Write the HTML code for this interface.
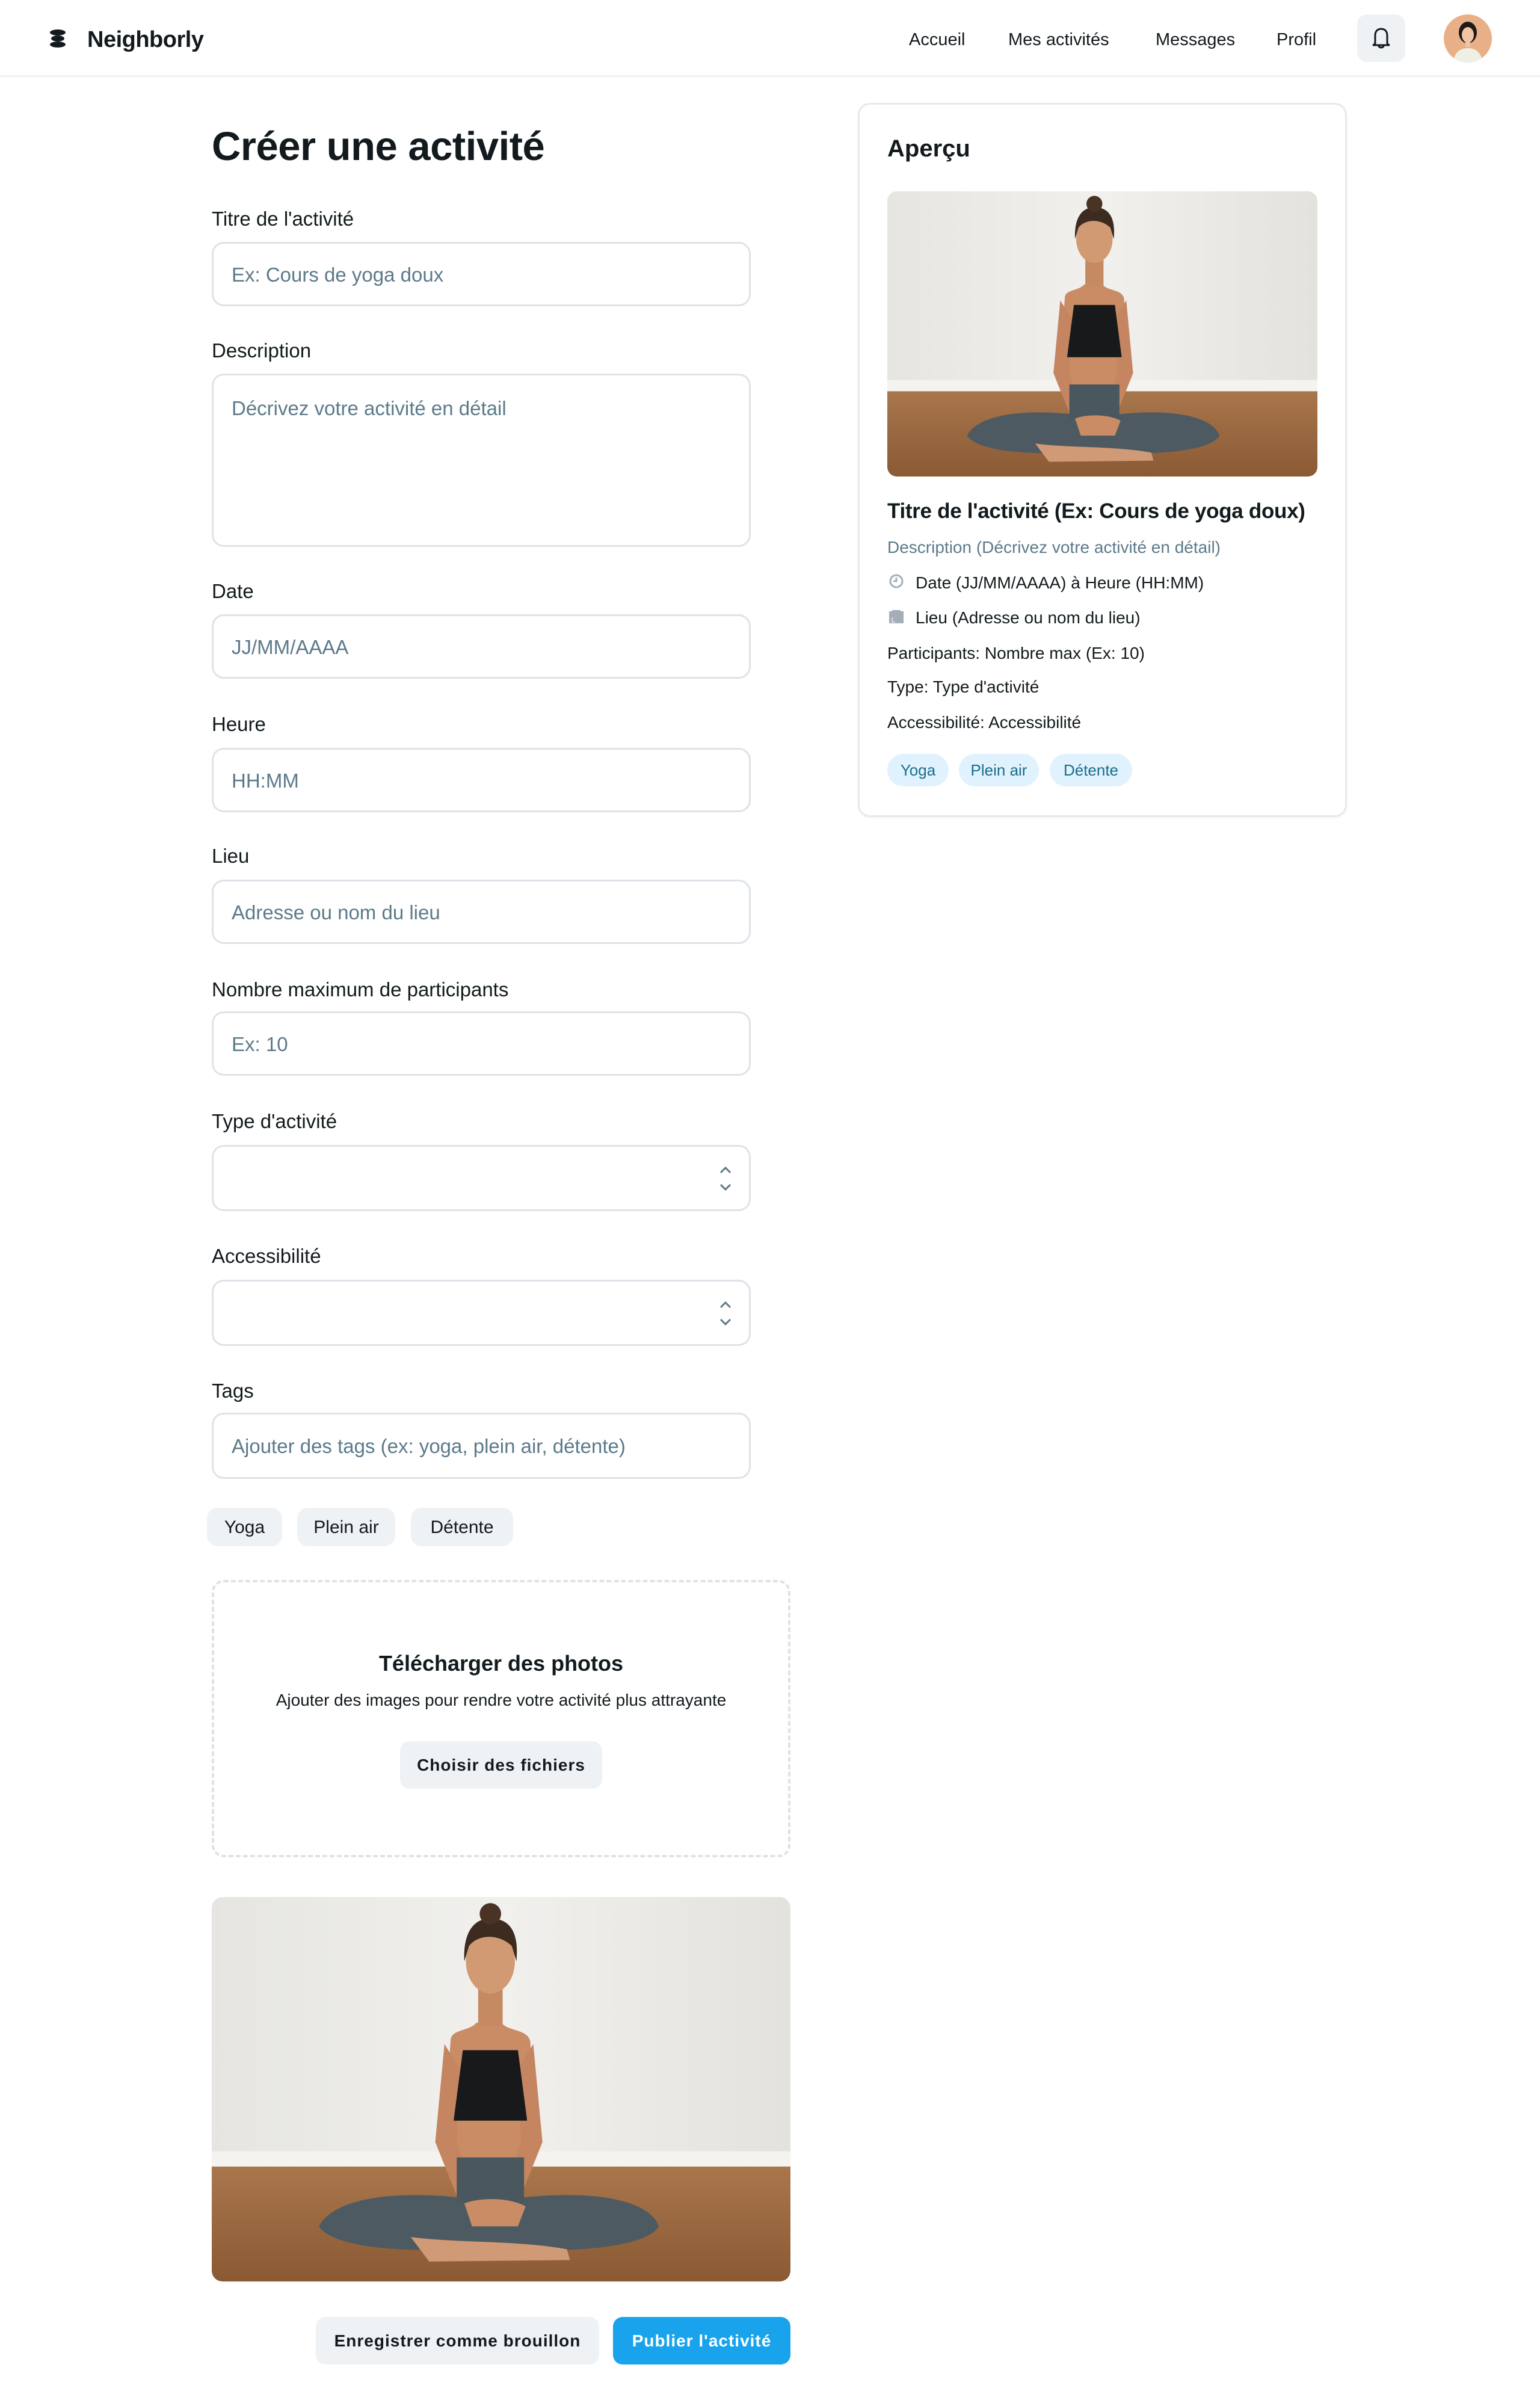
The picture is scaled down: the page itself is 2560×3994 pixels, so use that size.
<!DOCTYPE html>
<html><head><meta charset="utf-8">
<style>
*{box-sizing:border-box;margin:0;padding:0}
html,body{width:2560px;height:3994px;background:#fff;overflow:hidden}
body{font-family:"Liberation Sans",sans-serif;color:#121a1d;position:relative}
.a{position:absolute}
.hdr{left:0;top:0;width:2560px;height:128px;border-bottom:3px solid #eef1f3}
.nav{font-size:29px;top:50px;color:#121a1d}
.lbl{left:352px;font-size:33px;color:#121a1d}
.inp{left:352px;width:896px;height:107px;border:3px solid #dde3e8;border-radius:20px;background:#fff}
.ph{position:absolute;left:30px;top:0;line-height:103px;font-size:33px;color:#5c7a8a}
.chip{top:2506px;height:64px;line-height:66px;background:#eff2f4;border-radius:18px;font-size:30px;text-align:center;color:#121a1d}
.ptag{top:1253px;height:54px;line-height:54px;background:#e0f2fe;border-radius:27px;font-size:26px;text-align:center;color:#1a6e8a}
.pl{left:1475px;font-size:28px;color:#121a1d}
.chev{position:absolute;right:28px;top:30px}
</style></head><body>
<div class="a hdr"></div>
<svg class="a" style="left:80px;top:48px" width="32" height="32" viewBox="0 0 32 32"><ellipse cx="16" cy="6" rx="13" ry="5" fill="#121a1d"/><ellipse cx="16" cy="16" rx="11" ry="5" fill="#121a1d"/><ellipse cx="16" cy="26" rx="13" ry="5" fill="#121a1d"/></svg>
<div class="a" style="left:145px;top:45px;font-size:38px;font-weight:700;letter-spacing:-0.5px">Neighborly</div>
<div class="a nav" style="left:1511px">Accueil</div>
<div class="a nav" style="left:1676px">Mes activités</div>
<div class="a nav" style="left:1921px">Messages</div>
<div class="a nav" style="left:2122px">Profil</div>
<div class="a" style="left:2256px;top:24px;width:80px;height:79px;background:#eff2f4;border-radius:16px"></div>
<svg class="a" style="left:2280px;top:44px" width="32" height="38" viewBox="0 0 32 38"><path d="M6 28 L6 15 C6 8 10 4 16 4 C22 4 26 8 26 15 L26 28 L29 31 L3 31 Z" fill="none" stroke="#121a1d" stroke-width="3" stroke-linejoin="round"/><path d="M12 32 C12 36 20 36 20 32" fill="none" stroke="#121a1d" stroke-width="3"/></svg>
<svg class="a" style="left:2400px;top:24px" width="80" height="80" viewBox="0 0 80 80"><defs><clipPath id="cc"><circle cx="40" cy="40" r="40"/></clipPath></defs><g clip-path="url(#cc)"><rect width="80" height="80" fill="#e9b088"/><path d="M15 80 C18 62 28 56 40 56 C52 56 62 62 65 80Z" fill="#eef0e6"/><ellipse cx="40" cy="30" rx="15" ry="18" fill="#1e1a18"/><ellipse cx="40" cy="34" rx="10" ry="13" fill="#f0c4a4"/><rect x="36" y="44" width="8" height="10" fill="#f0c4a4"/></g></svg>

<div class="a" style="left:352px;top:205px;font-size:67px;font-weight:700;letter-spacing:-0.5px">Créer une activité</div>

<div class="a lbl" style="top:345px">Titre de l'activité</div>
<div class="a inp" style="top:402px"><span class="ph">Ex: Cours de yoga doux</span></div>
<div class="a lbl" style="top:564px">Description</div>
<div class="a inp" style="top:621px;height:288px"><span class="ph" style="top:30px;line-height:50px">Décrivez votre activité en détail</span></div>
<div class="a lbl" style="top:964px">Date</div>
<div class="a inp" style="top:1021px"><span class="ph">JJ/MM/AAAA</span></div>
<div class="a lbl" style="top:1185px">Heure</div>
<div class="a inp" style="top:1243px"><span class="ph">HH:MM</span></div>
<div class="a lbl" style="top:1404px">Lieu</div>
<div class="a inp" style="top:1462px"><span class="ph">Adresse ou nom du lieu</span></div>
<div class="a lbl" style="top:1626px">Nombre maximum de participants</div>
<div class="a inp" style="top:1681px"><span class="ph">Ex: 10</span></div>
<div class="a lbl" style="top:1845px">Type d'activité</div>
<div class="a inp" style="top:1903px;height:110px"><svg class="chev" width="22" height="48" viewBox="0 0 22 48"><path d="M3 13 L11 5 L19 13 M3 33 L11 41 L19 33" fill="none" stroke="#5c7a8a" stroke-width="3"/></svg></div>
<div class="a lbl" style="top:2069px">Accessibilité</div>
<div class="a inp" style="top:2127px;height:110px"><svg class="chev" width="22" height="48" viewBox="0 0 22 48"><path d="M3 13 L11 5 L19 13 M3 33 L11 41 L19 33" fill="none" stroke="#5c7a8a" stroke-width="3"/></svg></div>
<div class="a lbl" style="top:2293px">Tags</div>
<div class="a inp" style="top:2348px;height:110px"><span class="ph" style="line-height:106px">Ajouter des tags (ex: yoga, plein air, détente)</span></div>
<div class="a chip" style="left:344px;width:125px">Yoga</div>
<div class="a chip" style="left:494px;width:163px">Plein air</div>
<div class="a chip" style="left:683px;width:170px">Détente</div>

<div class="a" style="left:352px;top:2626px;width:962px;height:461px;border:4px dashed #dde3e8;border-radius:20px"></div>
<div class="a" style="left:352px;top:2744px;width:962px;text-align:center;font-size:36px;font-weight:700">Télécharger des photos</div>
<div class="a" style="left:352px;top:2810px;width:962px;text-align:center;font-size:28px">Ajouter des images pour rendre votre activité plus attrayante</div>
<div class="a" style="left:665px;top:2894px;width:336px;height:79px;line-height:79px;background:#eff2f4;border-radius:16px;text-align:center;font-size:28px;font-weight:700;letter-spacing:1px">Choisir des fichiers</div>

<svg class="a" style="left:352px;top:3153px;border-radius:18px" width="962" height="639" viewBox="0 0 378 251" preserveAspectRatio="none">
<defs><linearGradient id="w1" x1="0" x2="1"><stop offset="0" stop-color="#e6e5e1"/><stop offset=".5" stop-color="#f1f0ed"/><stop offset="1" stop-color="#e3e2de"/></linearGradient><linearGradient id="f1" y1="0" y2="1" x1="0" x2="0"><stop offset="0" stop-color="#a9764c"/><stop offset="1" stop-color="#8a5a34"/></linearGradient></defs>
<rect width="378" height="251" fill="url(#w1)"/><rect y="166" width="378" height="10" fill="#f4f3f0"/><rect y="176" width="378" height="75" fill="url(#f1)"/>
<path d="M156 94 C156 86 168 88 173 82 L189 82 C194 88 206 86 208 94 L212 150 L202 196 L162 196 L152 150 Z" fill="#c98c64"/>
<path d="M152 96 L146 160 L164 205 L174 200 L160 160 L162 112Z M210 96 L216 160 L198 205 L188 200 L202 160 L200 112Z" fill="#c48560"/>
<rect x="174" y="60" width="16" height="24" fill="#c58a62"/>
<path d="M164 100 L200 100 L206 146 L158 146Z" fill="#18191b"/>
<ellipse cx="182" cy="42" rx="16" ry="21" fill="#d29a72"/>
<path d="M165 42 C164 22 172 14 182 14 C194 14 201 22 199 42 L196 32 C188 24 174 24 168 32Z" fill="#3d2b20"/>
<circle cx="182" cy="11" r="7" fill="#4a3224"/>
<path d="M70 215 C80 196 120 192 160 196 L205 196 C245 192 285 196 292 215 C285 228 240 232 205 230 L160 230 C120 232 78 228 70 215Z" fill="#4d5a62"/>
<rect x="160" y="170" width="44" height="30" fill="#4a575f"/>
<path d="M130 222 C160 226 200 224 232 230 L234 237 L142 238Z" fill="#d09a76"/>
<path d="M165 200 C175 196 195 196 205 202 L200 215 L170 215Z" fill="#c98c64"/>
</svg>

<div class="a" style="left:525px;top:3851px;width:471px;height:79px;line-height:79px;background:#eff2f4;border-radius:16px;text-align:center;font-size:28px;font-weight:700;letter-spacing:1px">Enregistrer comme brouillon</div>
<div class="a" style="left:1019px;top:3851px;width:295px;height:79px;line-height:79px;background:#19a3ec;border-radius:16px;text-align:center;font-size:28px;font-weight:700;color:#fff;letter-spacing:1px">Publier l'activité</div>

<div class="a" style="left:1426px;top:171px;width:813px;height:1187px;border:3px solid #e6eaed;border-radius:20px;box-shadow:0 2px 4px rgba(0,0,0,.04)"></div>
<div class="a" style="left:1475px;top:225px;font-size:40px;font-weight:700">Aperçu</div>
<svg class="a" style="left:1475px;top:318px;border-radius:16px" width="715" height="474" viewBox="0 0 378 251" preserveAspectRatio="none">
<defs><linearGradient id="w2" x1="0" x2="1"><stop offset="0" stop-color="#e6e5e1"/><stop offset=".5" stop-color="#f1f0ed"/><stop offset="1" stop-color="#e3e2de"/></linearGradient><linearGradient id="f2" y1="0" y2="1" x1="0" x2="0"><stop offset="0" stop-color="#a9764c"/><stop offset="1" stop-color="#8a5a34"/></linearGradient></defs>
<rect width="378" height="251" fill="url(#w2)"/><rect y="166" width="378" height="10" fill="#f4f3f0"/><rect y="176" width="378" height="75" fill="url(#f2)"/>
<path d="M156 94 C156 86 168 88 173 82 L189 82 C194 88 206 86 208 94 L212 150 L202 196 L162 196 L152 150 Z" fill="#c98c64"/>
<path d="M152 96 L146 160 L164 205 L174 200 L160 160 L162 112Z M210 96 L216 160 L198 205 L188 200 L202 160 L200 112Z" fill="#c48560"/>
<rect x="174" y="60" width="16" height="24" fill="#c58a62"/>
<path d="M164 100 L200 100 L206 146 L158 146Z" fill="#18191b"/>
<ellipse cx="182" cy="42" rx="16" ry="21" fill="#d29a72"/>
<path d="M165 42 C164 22 172 14 182 14 C194 14 201 22 199 42 L196 32 C188 24 174 24 168 32Z" fill="#3d2b20"/>
<circle cx="182" cy="11" r="7" fill="#4a3224"/>
<path d="M70 215 C80 196 120 192 160 196 L205 196 C245 192 285 196 292 215 C285 228 240 232 205 230 L160 230 C120 232 78 228 70 215Z" fill="#4d5a62"/>
<rect x="160" y="170" width="44" height="30" fill="#4a575f"/>
<path d="M130 222 C160 226 200 224 232 230 L234 237 L142 238Z" fill="#d09a76"/>
<path d="M165 200 C175 196 195 196 205 202 L200 215 L170 215Z" fill="#c98c64"/>
</svg>
<div class="a" style="left:1475px;top:830px;font-size:35px;font-weight:700;letter-spacing:-0.3px">Titre de l'activité (Ex: Cours de yoga doux)</div>
<div class="a" style="left:1475px;top:894px;font-size:28px;color:#5c7a8a">Description (Décrivez votre activité en détail)</div>
<svg class="a" style="left:1478px;top:954px" width="24" height="24" viewBox="0 0 24 24"><circle cx="12" cy="12" r="10" fill="none" stroke="#a4adb8" stroke-width="3"/><path d="M12 6 V12 H7" fill="none" stroke="#a4adb8" stroke-width="3"/></svg>
<div class="a pl" style="left:1522px;top:953px">Date (JJ/MM/AAAA) à Heure (HH:MM)</div>
<svg class="a" style="left:1478px;top:1014px" width="24" height="22" viewBox="0 0 24 22"><path d="M0 2 L5 2 L5 0 L19 0 L19 2 L24 2 L24 22 L0 22Z" fill="#a4adb8"/><path d="M5 12 V20 H10" fill="none" stroke="#e6e9ec" stroke-width="1.5"/></svg>
<div class="a pl" style="left:1522px;top:1011px">Lieu (Adresse ou nom du lieu)</div>
<div class="a pl" style="top:1070px">Participants: Nombre max (Ex: 10)</div>
<div class="a pl" style="top:1126px">Type: Type d'activité</div>
<div class="a pl" style="top:1185px">Accessibilité: Accessibilité</div>
<div class="a ptag" style="left:1475px;width:102px">Yoga</div>
<div class="a ptag" style="left:1594px;width:133px">Plein air</div>
<div class="a ptag" style="left:1745px;width:137px">Détente</div>
</body></html>
